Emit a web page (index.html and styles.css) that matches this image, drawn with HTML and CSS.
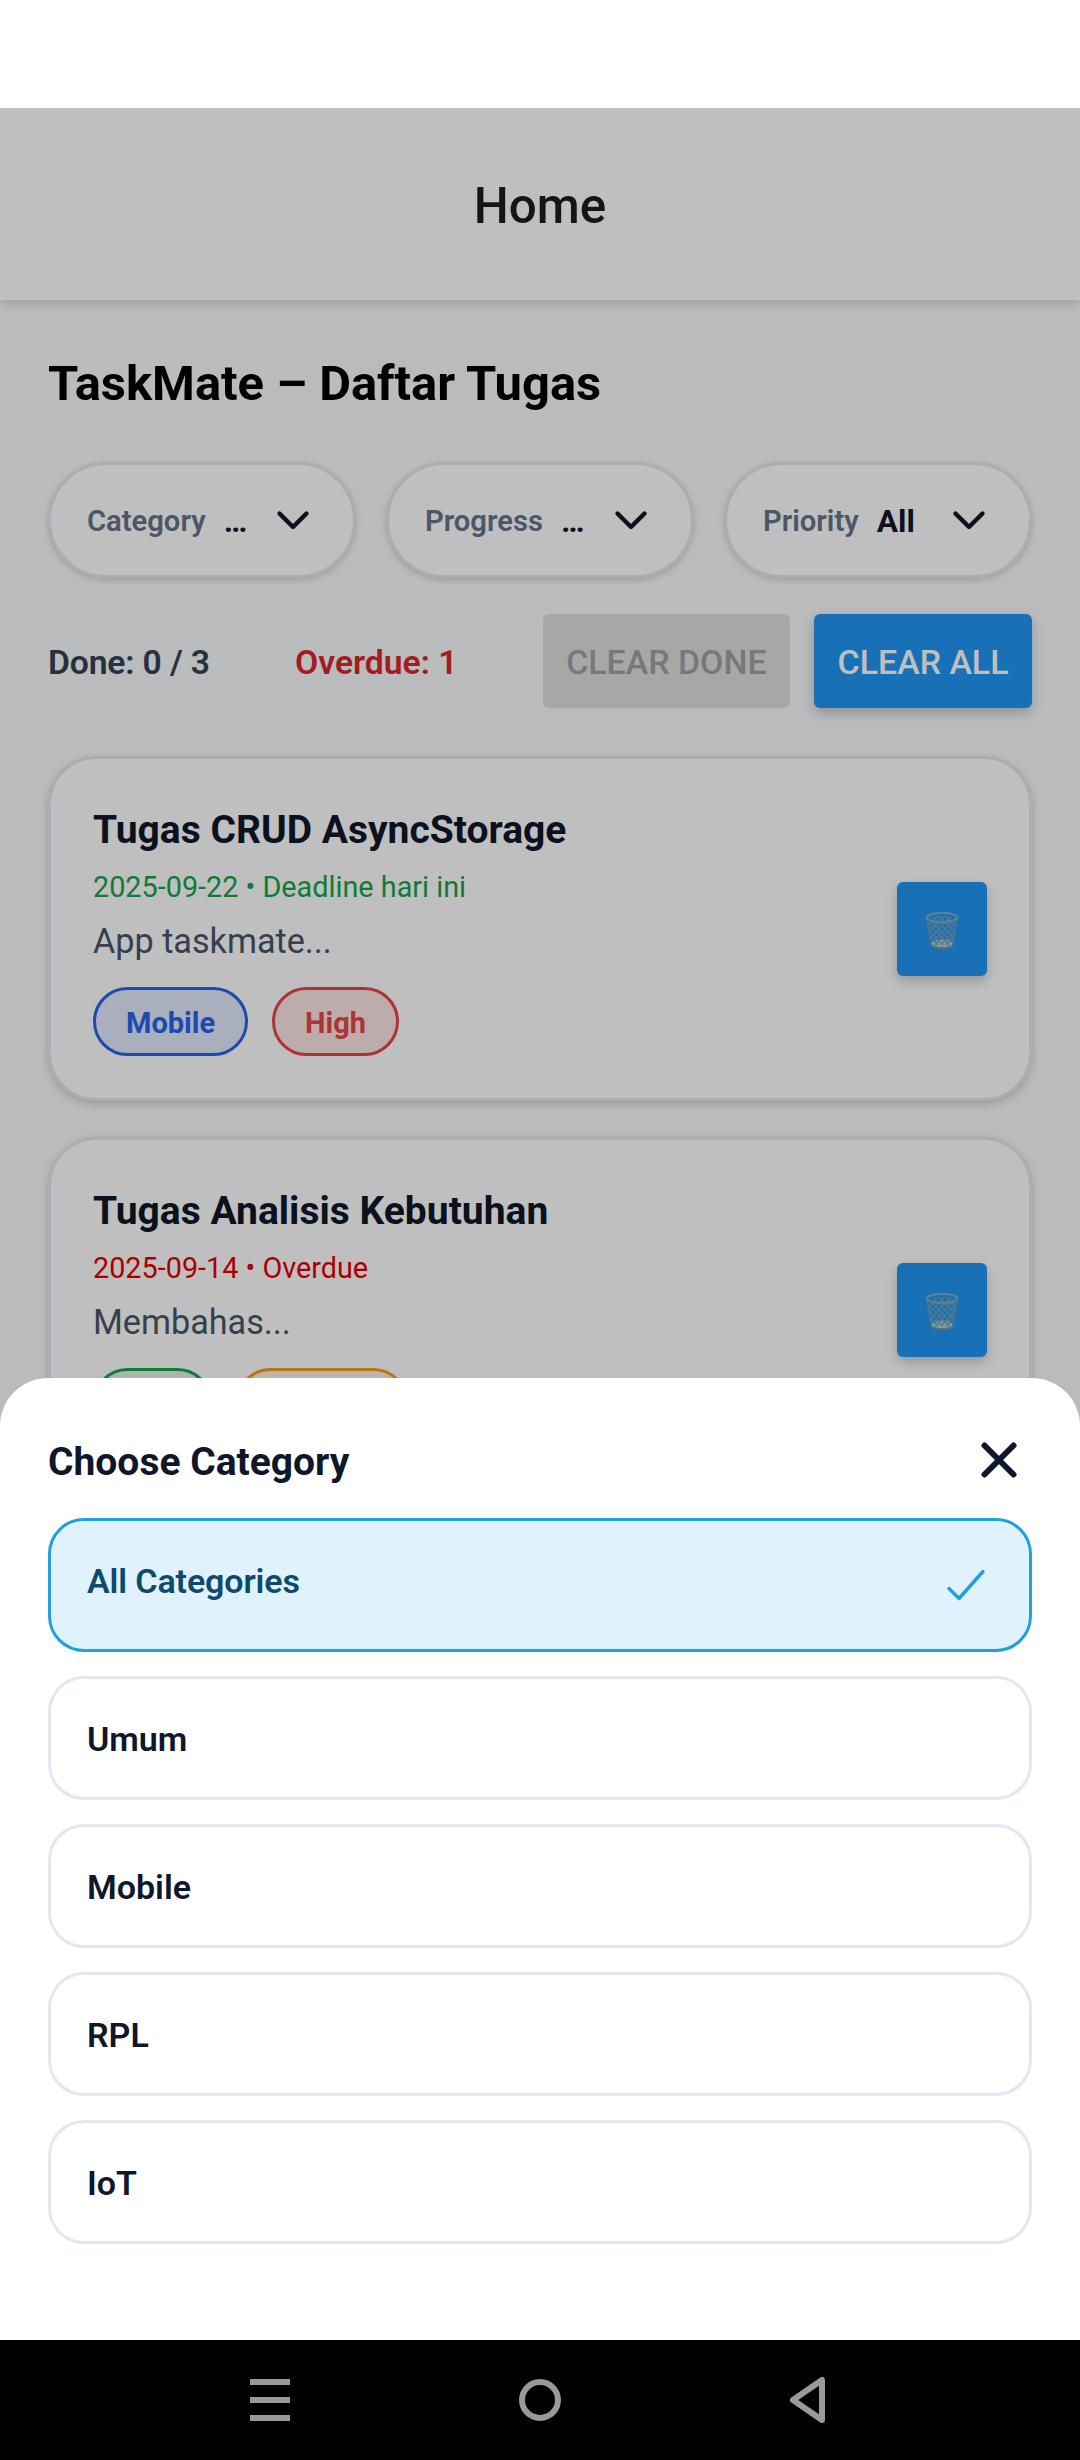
FILE: index.html
```html
<!DOCTYPE html>
<html lang="id">
<head>
<meta charset="utf-8">
<title>TaskMate</title>
<link rel="stylesheet" href="styles.css">
</head>
<body>
<svg class="defs" aria-hidden="true">
  <symbol id="chevron" viewBox="0 0 48 48"><path d="M10.5 17.5 24 31 37.500 17.500" fill="none" stroke="currentColor" stroke-width="4.400" stroke-linecap="round" stroke-linejoin="round"/></symbol>
  <symbol id="bin" viewBox="0 0 40 42">
    <ellipse cx="20" cy="34.500" rx="10.500" ry="4" fill="#a6d0d6"/>
    <path d="M9.300 35.500c2 3.600 19.400 3.600 21.400 0l-.5 2.500c-2 3.400-18.400 3.400-20.400 0z" fill="#5f929c"/>
    <g fill="none" stroke="#6fa3be" stroke-width="1.300">
      <path d="M7 9.500 29 33M11 7.500 31 28M17 7 33 23M24 7l9 9M5.500 13.500 27 36M7 20.500 21 36M8.500 27.500 16 36"/>
      <path d="M33 9.500 11 33M29 7.500 9 28M23 7 7 23M16 7l-9 9M34.500 13.500 13 36M33 20.500 19 36M31.500 27.500 24 36"/>
    </g>
    <path d="M5.200 10.500 9.300 36c2 3.800 19.400 3.800 21.400 0l4.100-25.500" fill="none" stroke="#6f9fb2" stroke-width="1.500"/>
    <ellipse cx="20" cy="8.500" rx="15.300" ry="4.700" fill="none" stroke="#7caebf" stroke-width="2.200"/>
  </symbol>
</svg>

<div class="status-bar"></div>

<div class="screen">
  <header class="header">Home</header>
  <main class="main">
    <h1 class="title">TaskMate – Daftar Tugas</h1>

    <div class="filters">
      <div class="filter"><span class="filter-label">Category</span><span class="filter-value">…</span><svg class="chevron"><use href="#chevron"/></svg></div>
      <div class="filter"><span class="filter-label">Progress</span><span class="filter-value">…</span><svg class="chevron"><use href="#chevron"/></svg></div>
      <div class="filter"><span class="filter-label">Priority</span><span class="filter-value">All</span><svg class="chevron"><use href="#chevron"/></svg></div>
    </div>

    <div class="summary">
      <span class="done">Done: 0 / 3</span>
      <span class="overdue">Overdue: 1</span>
      <div class="actions">
        <div class="button button-disabled">CLEAR DONE</div>
        <div class="button">CLEAR ALL</div>
      </div>
    </div>

    <div class="cards">
      <article class="card">
        <div class="card-body">
          <h2 class="card-title">Tugas CRUD AsyncStorage</h2>
          <p class="card-date today">2025-09-22 • Deadline hari ini</p>
          <p class="card-desc">App taskmate...</p>
          <div class="chips"><span class="chip blue">Mobile</span><span class="chip red">High</span></div>
        </div>
        <div class="button button-delete"><svg class="bin"><use href="#bin"/></svg></div>
      </article>
      <article class="card">
        <div class="card-body">
          <h2 class="card-title">Tugas Analisis Kebutuhan</h2>
          <p class="card-date late">2025-09-14 • Overdue</p>
          <p class="card-desc">Membahas...</p>
          <div class="chips"><span class="chip green">RPL</span><span class="chip amber">Medium</span></div>
        </div>
        <div class="button button-delete"><svg class="bin"><use href="#bin"/></svg></div>
      </article>
    </div>
  </main>

  <div class="backdrop"></div>
  <section class="sheet">
    <div class="sheet-head">
      <h2 class="sheet-title">Choose Category</h2>
      <svg class="close" viewBox="0 0 48 48"><path d="M9.500 9.500l29 29M38.500 9.500l-29 29" fill="none" stroke="currentColor" stroke-width="6" stroke-linecap="round"/></svg>
    </div>
    <div class="options">
      <div class="option selected"><span>All Categories</span><svg class="check" viewBox="0 0 54 54"><path d="M10 30.500 20 40.500 44 13.500" fill="none" stroke="currentColor" stroke-width="3.400" stroke-linecap="round" stroke-linejoin="round"/></svg></div>
      <div class="option"><span>Umum</span></div>
      <div class="option"><span>Mobile</span></div>
      <div class="option"><span>RPL</span></div>
      <div class="option"><span>IoT</span></div>
    </div>
  </section>
</div>

<nav class="system-nav">
  <svg viewBox="0 0 48 48"><path d="M4 3h40v6H4zM4 21h40v6H4zM4 39h40v6H4z" fill="#999"/></svg>
  <svg viewBox="0 0 48 48"><circle cx="24" cy="24" r="18" fill="none" stroke="#999" stroke-width="6"/></svg>
  <svg viewBox="0 0 48 48"><path d="M36 4v40L7 24z" fill="none" stroke="#999" stroke-width="6" stroke-linejoin="round"/></svg>
</nav>
</body>
</html>
```

FILE: styles.css
```css
* { box-sizing: border-box; }

body {
  margin: 0;
  width: 1080px;
  height: 2460px;
  display: flex;
  flex-direction: column;
  background: #fff;
  font-family: Roboto, "Noto Sans", sans-serif;
  overflow: hidden;
}

h1, h2, p { margin: 0; }
svg { display: block; flex: none; }
.defs { position: absolute; width: 0; height: 0; }

.status-bar { flex: none; height: 108px; }

.screen {
  position: relative;
  flex: none;
  height: 2232px;
  overflow: hidden;
  background: #f8fafc;
}

.header {
  position: relative;
  height: 192px;
  padding-top: 4px;
  display: flex;
  align-items: center;
  justify-content: center;
  background: #fff;
  box-shadow: 0 2px 12px rgba(0, 0, 0, .18);
  color: #1c1c1e;
  font-size: 49.4px;
  font-weight: 500;
}

.main { padding: 55px 48px 0; }

.title {
  color: #000;
  font-size: 48.9px;
  font-weight: 700;
  line-height: 58px;
}

.filters {
  display: grid;
  grid-template-columns: repeat(3, 1fr);
  gap: 30px;
  margin-top: 49px;
}

.filter {
  display: flex;
  align-items: center;
  height: 116px;
  padding: 0 36px;
  border: 3px solid #e2e8f0;
  border-radius: 58px;
  background: #fff;
  box-shadow: 0 2px 6px rgba(0, 0, 0, .17);
  color: #0f172a;
}

.filter-label {
  margin-right: 18px;
  padding-top: 2px;
  color: #64748b;
  font-size: 29.2px;
  font-weight: 560;
}

.filter-value {
  flex: 1;
  padding-top: 2px;
  font-size: 31.7px;
  font-weight: 700;
}

.chevron { width: 48px; height: 48px; }

.summary {
  display: flex;
  align-items: center;
  justify-content: space-between;
  height: 94px;
  margin-top: 36px;
  font-size: 33.7px;
  font-weight: 560;
}

.done, .overdue { padding-top: 2px; }
.done { color: #334155; letter-spacing: -.15px; }
.overdue { color: #dc2626; }

.actions { display: flex; gap: 24px; }

.button {
  display: flex;
  align-items: center;
  justify-content: center;
  height: 94px;
  padding: 2px 23.5px 0;
  border-radius: 6px;
  background: #2196f3;
  box-shadow: 0 5px 12px rgba(0, 0, 0, .22);
  color: #fff;
  font-size: 33.9px;
  font-weight: 500;
}

.button-disabled {
  background: #dfdfdf;
  box-shadow: none;
  color: #a1a1a1;
}

.cards {
  display: flex;
  flex-direction: column;
  gap: 36px;
  margin-top: 48px;
}

.card {
  display: flex;
  align-items: center;
  height: 345px;
  padding: 48px 42px 42px;
  border: 3px solid #e2e8f0;
  border-radius: 48px;
  background: #fff;
  box-shadow: 0 3px 8px rgba(0, 0, 0, .18);
}

.card-body { flex: 1; }

.card-title {
  color: #0f172a;
  font-size: 39px;
  font-weight: 700;
  line-height: 46px;
}

.card-date {
  margin-top: 17px;
  font-size: 28.8px;
  line-height: 34px;
}

.today { color: #16a34a; }
.late { color: #e60000; }

.card-desc {
  margin-top: 17px;
  color: #475569;
  font-size: 34.2px;
  line-height: 40px;
}

.chips { display: flex; gap: 24px; margin-top: 26px; }

.chip {
  height: 69px;
  padding: 3px 30px 0;
  border: 3px solid;
  border-radius: 35px;
  font-size: 29px;
  font-weight: 700;
  line-height: 60px;
}

.blue { color: #2563eb; background: rgba(37, 99, 235, .133); }
.red { color: #e84444; background: rgba(239, 68, 68, .133); }
.green { color: #16a34a; background: rgba(22, 163, 74, .133); }
.amber { color: #f0a014; background: rgba(245, 158, 11, .133); }

.button-delete {
  width: 90px;
  margin-bottom: 5px;
  padding: 2px 0 0;
}

.bin { width: 40px; height: 42px; }

.backdrop {
  position: absolute;
  inset: 0;
  background: rgba(0, 0, 0, .25);
}

.sheet {
  position: absolute;
  left: 0;
  right: 0;
  bottom: 0;
  padding: 52px 48px 96px;
  border-radius: 48px 48px 0 0;
  background: #fff;
  color: #0f172a;
}

.sheet-head {
  display: flex;
  align-items: center;
  justify-content: space-between;
  height: 60px;
  padding-right: 9px;
}

.sheet-title {
  padding-top: 3px;
  font-size: 39px;
  font-weight: 700;
}

.close { width: 48px; height: 48px; }

.options {
  display: flex;
  flex-direction: column;
  gap: 24px;
  margin-top: 28px;
}

.option {
  display: flex;
  align-items: flex-start;
  justify-content: space-between;
  padding: 37px 36px 35px;
  border: 3px solid #e2e8f0;
  border-radius: 36px;
  font-size: 34px;
  font-weight: 560;
  line-height: 46px;
}

.selected {
  padding-bottom: 37px;
  border-color: #1ea1dc;
  background: #e0f2fe;
  color: #0c4a6e;
  letter-spacing: -.12px;
}

.check { width: 54px; height: 54px; color: #1ea1dc; }

.system-nav {
  display: flex;
  align-items: center;
  justify-content: space-between;
  height: 120px;
  flex: none;
  padding: 0 246px;
  background: #000;
}

.system-nav svg { width: 48px; height: 48px; }
```
